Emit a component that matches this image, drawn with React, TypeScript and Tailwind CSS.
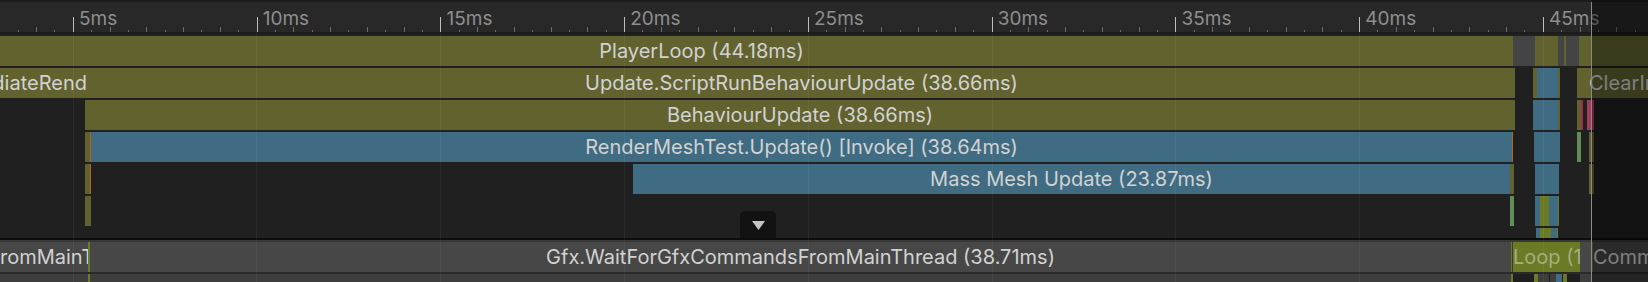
import React from "react";
import clsx from "clsx";

type Seg = { w: number; c: string; t?: string; a?: "l" | "r" | "c"; tc?: string };
type Row = { x: number; h: number; segs: Seg[] };

const OL = "bg-[#62622f]";
const BL = "bg-[#3f6c83]";
const DK = "bg-transparent";
const GY = "bg-[#444444]";
const OR = "bg-[#b4641e]";
const GR = "bg-[#5f8c57]";
const RD = "bg-[#a02d4c]";
const PK = "bg-[#a63c5c]";
const BO = "bg-[#6b7a25]";
const GX = "bg-[#474747]";
const G2 = "bg-[#3e3e3e]";
const BK = "bg-[#1f1f1f]";

const mainRows: Row[] = [
  {
    x: -110,
    h: 30,
    segs: [
      { w: 1623, c: OL, t: "PlayerLoop (44.18ms)" },
      { w: 22, c: GY },
      { w: 23, c: OL },
      { w: 6, c: GY },
      { w: 2, c: OL },
      { w: 13, c: GY },
      { w: 12, c: OL },
      { w: 80, c: OL },
    ],
  },
  {
    x: 0,
    h: 30,
    segs: [
      { w: 88, c: OL, t: "ImmediateRend", a: "r" },
      { w: 1427, c: OL, t: "Update.ScriptRunBehaviourUpdate (38.66ms)" },
      { w: 18, c: DK },
      { w: 4, c: OL },
      { w: 21, c: BL },
      { w: 2, c: OL },
      { w: 17, c: DK },
      { w: 12, c: OL },
      { w: 70, c: OL, t: "ClearIn", a: "l" },
    ],
  },
  {
    x: 85,
    h: 30,
    segs: [
      { w: 1430, c: OL, t: "BehaviourUpdate (38.66ms)" },
      { w: 18, c: DK },
      { w: 25, c: BL },
      { w: 2, c: OL },
      { w: 17, c: DK },
      { w: 4, c: OL },
      { w: 2, c: RD },
      { w: 4, c: DK },
      { w: 7, c: PK },
    ],
  },
  {
    x: 85,
    h: 30,
    segs: [
      { w: 5, c: OL },
      { w: 1, c: OR },
      { w: 1421, c: BL, t: "RenderMeshTest.Update() [Invoke] (38.64ms)" },
      { w: 1, c: OR },
      { w: 21, c: DK },
      { w: 26, c: BL },
      { w: 17, c: DK },
      { w: 4, c: GR },
      { w: 8, c: DK },
      { w: 5, c: OL },
    ],
  },
  {
    x: 85,
    h: 30,
    segs: [
      { w: 5, c: OL },
      { w: 1, c: OR },
      { w: 542, c: DK },
      { w: 877, c: BL, t: "Mass Mesh Update (23.87ms)" },
      { w: 4, c: OL },
      { w: 21, c: DK },
      { w: 24, c: BL },
      { w: 30, c: DK },
      { w: 5, c: OL },
    ],
  },
  {
    x: 85,
    h: 30,
    segs: [
      { w: 6, c: OL },
      { w: 1419, c: DK },
      { w: 4, c: GR },
      { w: 21, c: DK },
      { w: 5, c: BL },
      { w: 9, c: BO },
      { w: 9, c: BL },
      { w: 1, c: BO },
    ],
  },
  {
    x: 1536,
    h: 10,
    segs: [
      { w: 4, c: BL },
      { w: 11, c: BO },
      { w: 6, c: BL },
      { w: 1, c: BO },
    ],
  },
];

const gfxRow: Row = {
  x: 0,
  h: 30,
  segs: [
    { w: 88, c: GX, t: "romMainThread", a: "l" },
    { w: 2, c: BO },
    { w: 1421, c: GX, t: "Gfx.WaitForGfxCommandsFromMainThread (38.71ms)" },
    { w: 1, c: BO },
    { w: 1, c: "bg-[#3a3a3a]" },
    { w: 67, c: BO, t: "Loop (1", a: "l", tc: "text-[#a7ad80]" },
    { w: 11, c: GX },
    { w: 2, c: BO },
    { w: 70, c: GX, t: "Comm", a: "l" },
  ],
};

const gfxRow2: Row = {
  x: 0,
  h: 8,
  segs: [
    { w: 88, c: G2 },
    { w: 2, c: BO },
    { w: 1421, c: G2 },
    { w: 2, c: BO },
    { w: 21, c: BK },
    { w: 4, c: BO },
    { w: 11, c: G2 },
    { w: 1, c: BK },
    { w: 6, c: G2 },
    { w: 6, c: BL },
    { w: 1, c: BK },
    { w: 4, c: BO },
    { w: 13, c: BK },
    { w: 11, c: G2 },
    { w: 70, c: G2 },
  ],
};

const majors = [73, 256, 440, 624, 808, 992, 1175, 1359, 1543];

function Bars({ row }: { row: Row }) {
  return (
    <div className="flex shrink-0" style={{ marginLeft: row.x, height: row.h }}>
      {row.segs.map((s, i) => (
        <div
          key={i}
          className={clsx(
            "flex h-full shrink-0 items-center overflow-hidden whitespace-nowrap",
            s.c,
            s.a === "l" ? "justify-start" : s.a === "r" ? "justify-end pr-[1px]" : "justify-center"
          )}
          style={{ width: s.w }}
        >
          {s.t &&
            (s.a === "l" ? (
              <span className={clsx("min-w-0 overflow-hidden", s.tc ?? "text-[#d2d2d2]")}>{s.t}</span>
            ) : (
              <span className={clsx("shrink-0", s.tc ?? "text-[#d2d2d2]")}>{s.t}</span>
            ))}
        </div>
      ))}
    </div>
  );
}

function Ruler() {
  const ticks = [];
  for (let n = -4; n < 88; n++) {
    const x = Math.floor(73.3 + n * 18.375);
    if (n % 10 === 0) ticks.push(<rect key={n} x={x} y={15} width={1} height={15} fill="#bdbdbd" />);
    else if (n % 2 === 0) ticks.push(<rect key={n} x={x} y={25} width={1} height={5} fill="#6c6c6c" />);
    else ticks.push(<rect key={n} x={x} y={28} width={1} height={2} fill="#6c6c6c" />);
  }
  return (
    <svg className="absolute left-0 top-0" width={1648} height={30} shapeRendering="crispEdges">
      {ticks}
    </svg>
  );
}

export default function App() {
  return (
    <div className="relative h-[282px] w-[1648px] overflow-hidden bg-[#202020] font-['Inter',sans-serif] text-[20px]">
      <div className="relative h-[32px] border-t-2 border-[#1c1c1c] bg-[#282828]">
        <Ruler />
        <div className="flex pl-[79px] pt-[7px] text-[19px] leading-[19px] text-[#8e8e8e]">
          {["5ms", "10ms", "15ms", "20ms", "25ms", "30ms", "35ms", "40ms", "45ms"].map((l) => (
            <div key={l} className="w-[183.75px] shrink-0">
              {l}
            </div>
          ))}
        </div>
      </div>

      <div className="relative flex h-[206px] flex-col gap-[2px] overflow-hidden border-t-2 border-[#1c1c1c] pt-[2px]">
        {mainRows.map((r, i) => (
          <Bars key={i} row={r} />
        ))}
        <div className="absolute left-[740px] top-[177px] flex h-[27px] w-[36px] justify-center rounded-t-[5px] bg-[#121212] pt-[10px]">
          <svg width="13" height="9" viewBox="0 0 13 9">
            <polygon points="0,0 13,0 6.5,9" fill="#c4c4c4" />
          </svg>
        </div>
      </div>

      <div className="h-[2px] bg-[#0d0d0d]" />
      <div className="h-[2px] bg-[#383838]" />
      <Bars row={gfxRow} />
      <div className="h-[2px] bg-[#2a2a2a]" />
      <Bars row={gfxRow2} />

      {majors.map((x) => (
        <div key={x} className="pointer-events-none absolute bottom-0 top-[32px] w-px bg-white/5" style={{ left: x }} />
      ))}
      <div className="pointer-events-none absolute bottom-0 right-0 top-0 left-[1592px] bg-black/40" />
      <div className="pointer-events-none absolute bottom-0 left-[1591px] top-[2px] w-px bg-[#8a8a8a]" />
    </div>
  );
}
